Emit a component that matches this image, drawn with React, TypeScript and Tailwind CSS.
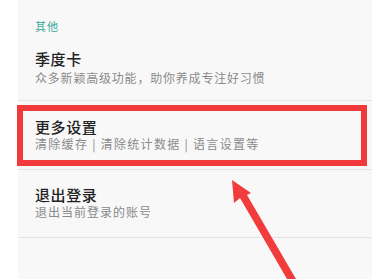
import React from "react"

const font = { fontFamily: '"Noto Sans CJK SC", "Noto Sans", sans-serif' }

type Item = {
  title: string
  desc: string
  box: string
  pt: string
  gap: string
  track: string
}

const items: Item[] = [
  { title: "季度卡", desc: "众多新颖高级功能，助你养成专注好习惯", box: "h-[61px]", pt: "pt-[10px]", gap: "mt-[2px]", track: "tracking-[0.8px]" },
  { title: "更多设置", desc: "清除缓存 | 清除统计数据 | 语言设置等", box: "h-[69px]", pt: "pt-[17px]", gap: "mt-0", track: "tracking-[1.3px]" },
  { title: "退出登录", desc: "退出当前登录的账号", box: "h-[68px]", pt: "pt-[16px]", gap: "mt-0", track: "tracking-[1px]" },
]

function SettingRow({ item }: { item: Item }) {
  return (
    <div className={`${item.box} ${item.pt} box-border border-b border-[#e4e4e4] px-[17px]`}>
      <div className="text-[15px] leading-[18px] font-medium tracking-[0.6px] text-[#222]">{item.title}</div>
      <div className={`${item.gap} ${item.track} text-[12px] leading-[16px] text-[#8a8a8a] whitespace-nowrap`}>
        {item.desc}
      </div>
    </div>
  )
}

export default function App() {
  return (
    <div className="relative w-[380px] h-[279px] overflow-hidden bg-white" style={font}>
      <div className="ml-[18px] w-[354px] h-full bg-[#f8f8f8]">
        <div className="h-[40px] pt-[19px] px-[17px] text-[11px] leading-[14px] tracking-[1px] text-[#3aa89b]">其他</div>
        {items.map((item) => (
          <SettingRow key={item.title} item={item} />
        ))}
      </div>

      {/* annotation overlay */}
      <div className="absolute left-[17px] top-[105px] w-[350px] h-[61px] border-[6px] border-[#f33a3a]" />
      <svg className="absolute inset-0" width="380" height="279" viewBox="0 0 380 279">
        <polygon
          points="232,180 251,193 247,195 296,279 287,279 240,198 234,203"
          fill="#f23b3b"
        />
      </svg>
    </div>
  )
}
